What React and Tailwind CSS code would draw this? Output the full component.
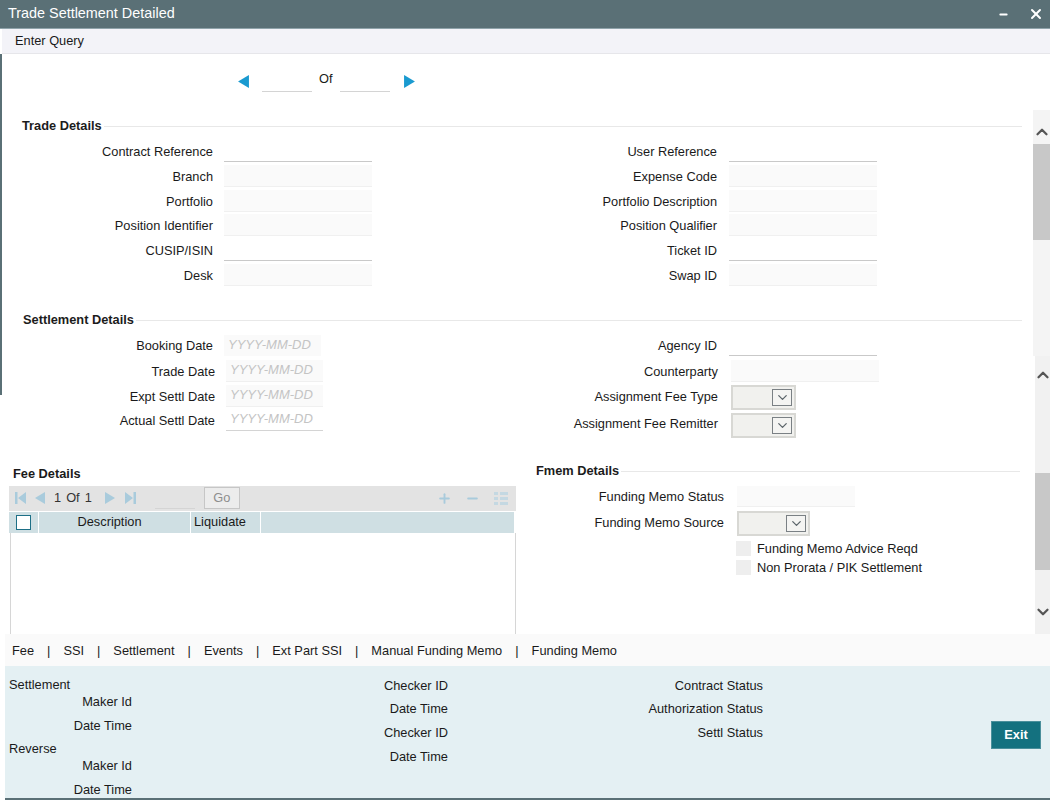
import { ChevronUp, ChevronDown, Plus, Minus, X } from "lucide-react"

const inputCls = {
  line: "h-[22px] w-[148px] border-b border-[#c9c9c9]",
  box: "h-[22px] w-[148px] bg-[#fafafa] border-b border-[#f0f0f0]",
}

function Field({ label, type, right }) {
  return (
    <div className="h-[24.7px] flex items-center">
      <div className="w-[213px] text-right pt-[2px]">{label}</div>
      <div className={`${right ? "ml-[12px]" : "ml-[11px]"} ${inputCls[type]}`} />
    </div>
  )
}

function DateField({ label, shift, line, flat }) {
  return (
    <div className="h-[24.5px] flex items-center">
      <div className={`${shift ? "w-[215px]" : "w-[213px]"} text-right ${flat ? "" : "pt-[2px]"}`}>{label}</div>
      <div
        className={
          line
            ? "ml-[11px] h-[22px] w-[97px] border-b border-[#d4d4d4] italic text-[13px] text-[#c4c4c4] pl-[4px] leading-[20px]"
            : "ml-[11px] h-[22px] w-[97px] bg-[#fafafa] border-b border-[#f0f0f0] italic text-[13px] text-[#c4c4c4] pl-[4px] leading-[20px]"
        }
      >
        YYYY-MM-DD
      </div>
    </div>
  )
}

function Select({ wide }) {
  return (
    <div
      className={
        wide
          ? "h-[25px] w-[73px] bg-[#f1f1ee] border-2 border-[#d8d8d4] flex items-center justify-end pr-[2px]"
          : "h-[25px] w-[65px] bg-[#f1f1ee] border-2 border-[#d8d8d4] flex items-center justify-end pr-[2px]"
      }
    >
      <div className="w-[20px] h-[17px] border border-[#7a8084] bg-[#f4f4f2] flex items-center justify-center">
        <ChevronDown className="w-[15px] h-[15px] text-[#5b6469]" strokeWidth={2} />
      </div>
    </div>
  )
}

function SectionHead({ title, className }) {
  return (
    <div className={`h-[18px] flex items-center gap-[2px] ${className}`}>
      <span className="font-bold text-[#1c1c1c] shrink-0">{title}</span>
      <div className="flex-1 h-px bg-[#e8e8e8]" />
    </div>
  )
}

function Tri({ dir, color, className }) {
  return (
    <svg viewBox="0 0 10 12" className={className} fill={color}>
      {dir === "left" ? <path d="M10 0V12L0 6Z" /> : <path d="M0 0V12L10 6Z" />}
    </svg>
  )
}

function GridToolbar() {
  const pale = "#a9cbdc"
  return (
    <div className="h-[25px] bg-[#e3e3e3] flex items-center pl-[6px] pr-[8px] text-[#333]">
      <svg viewBox="0 0 11 12" className="w-[11px] h-[12px]" fill={pale}>
        <path d="M0 0H2.5V12H0ZM11 0V12L3 6Z" />
      </svg>
      <Tri dir="left" color={pale} className="w-[10px] h-[12px] ml-[9px]" />
      <span className="ml-[9px]">1</span>
      <span className="ml-[5px]">Of</span>
      <span className="ml-[5px]">1</span>
      <Tri dir="right" color={pale} className="w-[10px] h-[12px] ml-[13px]" />
      <svg viewBox="0 0 11 12" className="w-[11px] h-[12px] ml-[10px]" fill={pale}>
        <path d="M0 0V12L8 6ZM8.5 0H11V12H8.5Z" />
      </svg>
      <div className="ml-[19px] w-[40px] h-[22px] border-b border-[#d4d4d4]" />
      <div className="ml-[9px] w-[36px] h-[22px] border border-[#c6c6c6] bg-[#ececec] text-[#8e8e8e] flex items-center justify-center">
        Go
      </div>
      <div className="flex-1" />
      <Plus className="w-[15px] h-[15px] text-[#a9cbdc]" strokeWidth={3} />
      <Minus className="w-[15px] h-[15px] text-[#a9cbdc] ml-[13px]" strokeWidth={3} />
      <svg viewBox="0 0 14 13" className="w-[14px] h-[13px] ml-[14px]" fill="#c4d8e2">
        <path d="M0 0H4V3H0ZM6 0H14V3H6ZM0 5H4V8H0ZM6 5H14V8H6ZM0 10H4V13H0ZM6 10H14V13H6Z" />
      </svg>
    </div>
  )
}

const tabs = ["Fee", "SSI", "Settlement", "Events", "Ext Part SSI", "Manual Funding Memo", "Funding Memo"]

export default function App() {
  return (
    <div className="w-[1050px] h-[803px] bg-white overflow-hidden flex flex-col text-[12.8px] leading-[18px] text-[#1a1a1a] font-['Liberation_Sans',Arial,sans-serif]">
      {/* Title bar */}
      <div className="h-[29px] shrink-0 bg-[#5a7076] border-b border-[#8fa3aa] flex items-center pl-[8px] pr-[6px] text-white text-[14.4px]">
        <span className="flex-1 -mt-[2px]">Trade Settlement Detailed</span>
        <Minus className="w-[11px] h-[11px] mr-[19px]" strokeWidth={4} />
        <X className="w-[16px] h-[16px]" strokeWidth={3} />
      </div>

      {/* Toolbar */}
      <div className="h-[25px] shrink-0 bg-[#f3f3f8] border-b border-[#e6e6ea] ml-[2px] pl-[13px] flex items-center">
        Enter Query
      </div>

      {/* Record pager */}
      <div className="h-[56px] shrink-0 border-l-2 border-[#5a7076] flex items-center pl-[236px] pb-[2px]">
        <Tri dir="left" color="#1a9ad0" className="w-[11px] h-[13px]" />
        <div className="ml-[13px] w-[50px] h-[22px] border-b border-[#d4d4d4]" />
        <span className="ml-[7px] -mt-[4px]">Of</span>
        <div className="ml-[7px] w-[50px] h-[22px] border-b border-[#d4d4d4]" />
        <Tri dir="right" color="#1a9ad0" className="w-[11px] h-[13px] ml-[14px]" />
      </div>

      {/* Upper panel: trade and settlement details */}
      <div className="h-[246px] shrink-0 flex border-l-2 border-[#5a7076] overflow-hidden">
        <div className="flex-1 -ml-[2px] min-w-0">
          <SectionHead title="Trade Details" className="mt-[7px] ml-[22px] mr-[11px]" />
          <div className="flex mt-[4px]">
            <div className="w-[504px]">
              <Field label="Contract Reference" type="line" />
              <Field label="Branch" type="box" />
              <Field label="Portfolio" type="box" />
              <Field label="Position Identifier" type="box" />
              <Field label="CUSIP/ISIN" type="line" />
              <Field label="Desk" type="box" />
            </div>
            <div className="flex-1">
              <Field label="User Reference" type="line" right />
              <Field label="Expense Code" type="box" right />
              <Field label="Portfolio Description" type="box" right />
              <Field label="Position Qualifier" type="box" right />
              <Field label="Ticket ID" type="line" right />
              <Field label="Swap ID" type="box" right />
            </div>
          </div>
          <SectionHead title="Settlement Details" className="mt-[24px] ml-[23px] mr-[11px]" />
          <div className="flex mt-[5px]">
            <div className="w-[504px]">
              <DateField label="Booking Date" flat />
            </div>
            <div className="flex-1">
              <div className="h-[24.5px] flex items-center">
                <div className="w-[213px] text-right">Agency ID</div>
                <div className="ml-[12px] h-[20px] w-[148px] border-b border-[#c9c9c9]" />
              </div>
            </div>
          </div>
        </div>
        <div className="w-[17px] shrink-0 bg-[#f4f4f4] flex flex-col items-center">
          <ChevronUp className="w-[18px] h-[18px] mt-[13px] text-[#555]" strokeWidth={3} />
          <div className="w-full h-[96px] bg-[#c8c8c8] mt-[3px]" />
        </div>
      </div>

      {/* Lower panel: fee and fmem details */}
      <div className="h-[278px] shrink-0 flex relative">
        <div className="absolute left-0 top-0 w-[2px] h-[39px] bg-[#5a7076]" />
        <div className="w-[525px] shrink-0 flex flex-col">
          <div className="pt-[3px]">
            <DateField label="Trade Date" shift />
            <DateField label="Expt Settl Date" shift />
            <DateField label="Actual Settl Date" shift line />
          </div>
          <div className="ml-[13px] mt-[32px] h-[18px] font-bold">Fee Details</div>
          <div className="ml-[9px] w-[507px] mt-[3px] flex flex-col flex-1">
            <GridToolbar />
            <div className="h-[21px] mt-px mr-[2px] flex items-stretch gap-[1px] bg-white">
              <div className="w-[29px] bg-[#cfdfe3] flex items-center justify-center">
                <div className="w-[15px] h-[15px] bg-white border border-[#1d6f86]" />
              </div>
              <div className="w-[151px] bg-[#cfdfe3] flex items-center justify-center pr-[10px]">Description</div>
              <div className="w-[69px] bg-[#cfdfe3] flex items-center pl-[3px]">Liquidate</div>
              <div className="flex-1 bg-[#cfdfe3]" />
            </div>
            <div className="flex-1 ml-[1px] border-l border-r border-[#d6d6d6]" />
          </div>
        </div>

        <div className="flex-1 min-w-0">
          <div className="pt-[4px] flex flex-col">
            <div className="flex items-center h-[22px]">
              <div className="w-[193px] text-right pt-[2px]">Counterparty</div>
              <div className="ml-[13px] h-[22px] w-[148px] bg-[#fafafa] border-b border-[#f0f0f0]" />
            </div>
            <div className="flex mt-[3px]">
              <div className="w-[193px] text-right mt-[3px]">Assignment Fee Type</div>
              <div className="ml-[13px]">
                <Select />
              </div>
            </div>
            <div className="flex mt-[3px]">
              <div className="w-[193px] text-right mt-[2px]">Assignment Fee Remitter</div>
              <div className="ml-[13px]">
                <Select />
              </div>
            </div>
          </div>
          <SectionHead title="Fmem Details" className="mt-[24px] ml-[11px] mr-[15px]" />
          <div className="flex items-center mt-[6px] h-[21px]">
            <div className="w-[199px] text-right">Funding Memo Status</div>
            <div className="ml-[13px] h-[21px] w-[118px] bg-[#fafafa] border-b border-[#f0f0f0]" />
          </div>
          <div className="flex items-center mt-[4px]">
            <div className="w-[199px] text-right -mt-[2px]">Funding Memo Source</div>
            <div className="ml-[13px]">
              <Select wide />
            </div>
          </div>
          <div className="flex items-center ml-[211px] mt-[5px] h-[15px]">
            <div className="w-[15px] h-[15px] bg-[#eeeeee]" />
            <span className="ml-[6px]">Funding Memo Advice Reqd</span>
          </div>
          <div className="flex items-center ml-[211px] mt-[4px] h-[15px]">
            <div className="w-[15px] h-[15px] bg-[#eeeeee]" />
            <span className="ml-[6px]">Non Prorata / PIK Settlement</span>
          </div>
        </div>

        <div className="w-[15px] shrink-0 bg-[#f1f1f1] flex flex-col items-center">
          <ChevronUp className="w-[18px] h-[18px] mt-[10px] text-[#555]" strokeWidth={3} />
          <div className="w-full h-[97px] bg-[#c8c8c8] mt-[89px]" />
          <ChevronDown className="w-[18px] h-[18px] mt-[33px] text-[#555]" strokeWidth={3} />
        </div>
      </div>

      {/* Tabs */}
      <div className="h-[32px] shrink-0 ml-[5px] pl-[7px] pt-[2px] bg-[#fafafa] flex items-center">
        {tabs.map((tab, i) => (
          <div key={tab} className="flex items-center">
            {i > 0 && <span className="mx-[13px]">|</span>}
            <span>{tab}</span>
          </div>
        ))}
      </div>

      {/* Audit footer */}
      <div className="h-[134px] shrink-0 ml-[5px] bg-[#e4f0f3] border-b-2 border-[#5a7076] flex">
        <div className="w-[127px] pt-[10px] text-right">
          <div className="text-left pl-[4px]">Settlement</div>
          <div className="-mt-[1px]">Maker Id</div>
          <div className="mt-[6px]">Date Time</div>
          <div className="text-left pl-[4px] mt-[5px]">Reverse</div>
          <div className="-mt-[1px]">Maker Id</div>
          <div className="mt-[6px]">Date Time</div>
        </div>
        <div className="w-[316px] pt-[11px] text-right">
          <div>Checker ID</div>
          <div className="mt-[5px]">Date Time</div>
          <div className="mt-[6px]">Checker ID</div>
          <div className="mt-[6px]">Date Time</div>
        </div>
        <div className="w-[315px] pt-[11px] text-right">
          <div>Contract Status</div>
          <div className="mt-[5px]">Authorization Status</div>
          <div className="mt-[6px]">Settl Status</div>
        </div>
        <div className="ml-auto mr-[9px] mt-[55px] w-[50px] h-[28px] bg-[#14717f] border border-[#4a8f9b] text-white font-bold flex items-center justify-center">
          Exit
        </div>
      </div>
    </div>
  )
}
